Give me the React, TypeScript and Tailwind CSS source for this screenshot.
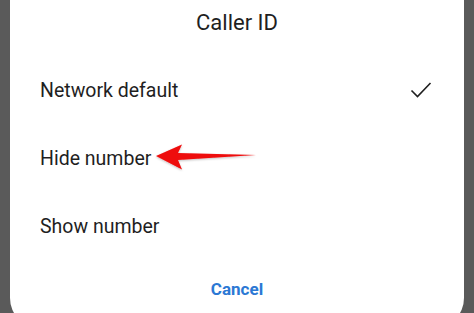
import React from "react";

export default function App() {
  return (
    <div className="h-[313px] w-[474px] overflow-hidden bg-[#5a5a5a] px-[10px]" style={{ fontFamily: "Roboto, 'Liberation Sans', sans-serif" }}>
      <div className="h-[328px] bg-white rounded-b-[30px] flex flex-col text-[#1f1f1f]">
        <div className="h-[44px] flex items-center justify-center text-[22px]">Caller ID</div>
        <div className="h-[13px]" />
        <div className="h-[68px] flex items-center pl-[30px] pr-[32px] justify-between">
          <span className="text-[19.5px] leading-[24px]">Network default</span>
          <svg width="22" height="18" viewBox="0 0 22 18" className="mt-[-2px]">
            <path d="M1.5 9.5 L7.5 15.5 L20.5 2" fill="none" stroke="#1f1f1f" strokeWidth="1.6" />
          </svg>
        </div>
        <div className="h-[68px] flex items-center pl-[30px]">
          <span className="text-[19.5px] leading-[24px]">Hide number</span>
          <svg width="104" height="30" viewBox="0 0 104 30" className="ml-[4px] mt-[-3px]">
            <defs>
              <filter id="s" x="-10%" y="-30%" width="120%" height="160%">
                <feDropShadow dx="0" dy="1" stdDeviation="1" floodColor="#000" floodOpacity="0.25" />
              </filter>
            </defs>
            <path d="M1 13 L27 1.5 L23 10 L101 12 L23 17 L27 26.5 Z" fill="#ee0a0a" filter="url(#s)" />
          </svg>
        </div>
        <div className="h-[68px] flex items-center pl-[30px]">
          <span className="text-[19.5px] leading-[24px]">Show number</span>
        </div>
        <div className="h-[58px] flex items-center justify-center">
          <span className="text-[17px] font-bold text-[#2b78d4]">Cancel</span>
        </div>
      </div>
    </div>
  );
}
